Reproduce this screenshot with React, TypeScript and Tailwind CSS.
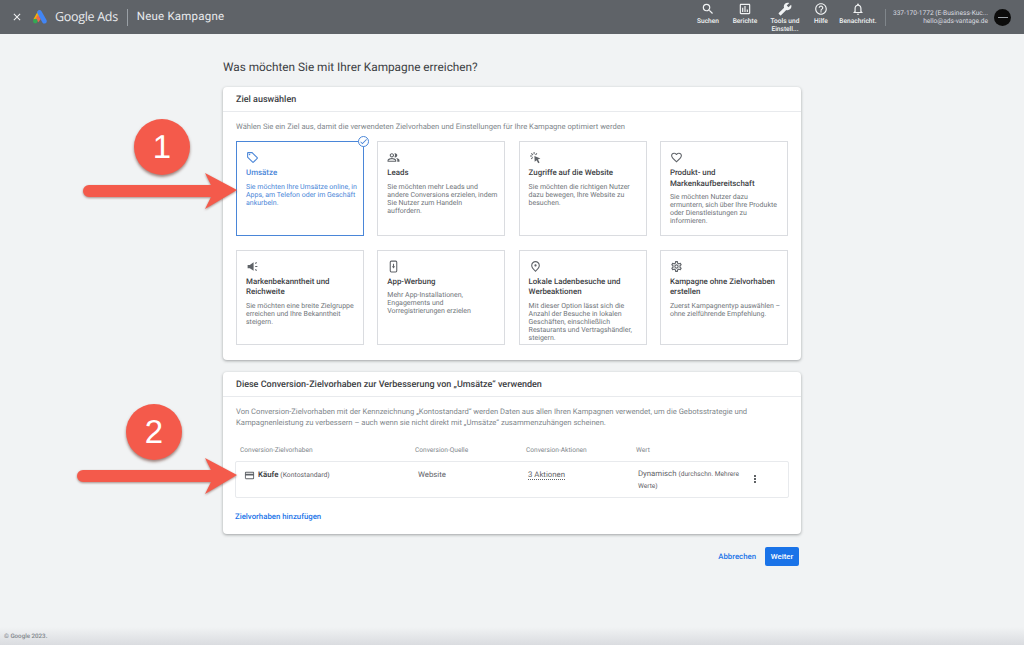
import React from "react";
import {
  MdClose,
  MdSearch,
  MdOutlineAssessment,
  MdBuild,
  MdHelpOutline,
  MdOutlineNotifications,
  MdOutlineLocalOffer,
  MdOutlinePeopleAlt,
  MdFavoriteBorder,
  MdOutlinePlace,
  MdOutlineSettings,
  MdOutlineCreditCard,
  MdMoreVert,
  MdCheck,
} from "react-icons/md";

const ClickIcon = ({ className }: { className?: string }) => (
  <svg viewBox="0 0 24 24" className={className} fill="currentColor">
    <path d="M10 9l11 5-4.5 1.6L19.5 21l-2.5 1.4-3-5.4L10.5 20z" />
    <path d="M8.5 2h1.8v4H8.5zM2 8.5h4v1.8H2zM3.6 4.9l1.3-1.3 2.8 2.8-1.3 1.3zM3.4 14.1l2.8-2.8 1.3 1.3-2.8 2.8zM14 3.7l1.3 1.3-2.7 2.7-1.3-1.3z" />
  </svg>
);

const SpeakerIcon = ({ className }: { className?: string }) => (
  <svg viewBox="0 0 24 24" className={className} fill="currentColor">
    <path d="M3 9h4l7-5v16l-7-5H3z" />
    <path d="M17 11h4v2h-4zM16.5 5.5l2.8-1.6 1 1.7-2.8 1.6zM16.5 18.5l1-1.7 2.8 1.6-1 1.7z" />
  </svg>
);

const PhoneIcon = ({ className }: { className?: string }) => (
  <svg viewBox="0 0 24 24" className={className} fill="none" stroke="currentColor" strokeWidth="2">
    <rect x="6" y="2" width="12" height="20" rx="2" />
    <path d="M12 7v6" />
    <path d="M9 11.5h6L12 15.5z" fill="currentColor" stroke="none" />
  </svg>
);

const navItems = [
  { label: "Suchen", icon: MdSearch, width: "w-[36px]", flip: false },
  { label: "Berichte", icon: MdOutlineAssessment, width: "w-[38px]", flip: false },
  { label: "Tools und Einstell...", icon: MdBuild, width: "w-[42px]", flip: true },
  { label: "Hilfe", icon: MdHelpOutline, width: "w-[30px]", flip: false },
  { label: "Benachricht.", icon: MdOutlineNotifications, width: "w-[44px]", flip: false },
];

const goals = [
  { title: "Umsätze", text: "Sie möchten Ihre Umsätze online, in Apps, am Telefon oder im Geschäft ankurbeln.", icon: MdOutlineLocalOffer, active: true },
  { title: "Leads", text: "Sie möchten mehr Leads und andere Conversions erzielen, indem Sie Nutzer zum Handeln\nauffordern.", icon: MdOutlinePeopleAlt },
  { title: "Zugriffe auf die Website", text: "Sie möchten die richtigen Nutzer dazu bewegen, Ihre Website zu besuchen.", icon: ClickIcon },
  { title: "Produkt- und Markenkaufbereitschaft", text: "Sie möchten Nutzer dazu ermuntern, sich über Ihre Produkte oder Dienstleistungen zu informieren.", icon: MdFavoriteBorder },
  { title: "Markenbekanntheit und Reichweite", text: "Sie möchten eine breite Zielgruppe erreichen und Ihre Bekanntheit steigern.", icon: SpeakerIcon },
  { title: "App-Werbung", text: "Mehr App-Installationen, Engagements und Vorregistrierungen erzielen", icon: PhoneIcon },
  { title: "Lokale Ladenbesuche und Werbeaktionen", text: "Mit dieser Option lässt sich die Anzahl der Besuche in lokalen Geschäften, einschließlich Restaurants und Vertragshändler, steigern.", icon: MdOutlinePlace },
  { title: "Kampagne ohne Zielvorhaben erstellen", text: "Zuerst Kampagnentyp auswählen – ohne zielführende Empfehlung.", icon: MdOutlineSettings },
];

const GoogleAdsLogo = () => (
  <svg viewBox="0 0 18 18" className="w-4 h-4 shrink-0">
    <path d="M6.6 2.6 1.6 11.5l3.6 2.2 5-8.9z" fill="#f4b400" />
    <path d="M7 1.6c1.2-.9 2.9-.5 3.7.8l5.6 10c.7 1.3.3 2.9-1 3.7-1.3.7-2.9.3-3.6-1L6.1 5.2C5.4 4 5.8 2.5 7 1.6z" fill="#4285f4" />
    <path d="M6.6 6.4 4 11l3 4 2.8-3.6z" fill="#ea6a4f" />
    <circle cx="3.7" cy="13.6" r="2.6" fill="#34a853" />
  </svg>
);

const Arrow = ({ className, width }: { className: string; width: number }) => (
  <svg width={width} height={38} className={className}>
    <path
      d={`M6 13 H${width - 27} L${width - 33} 1 L${width - 1} 18 L${width - 33} 37 L${width - 27} 25 H6 a6 6 0 0 1 0 -12 z`}
      fill="#f45a4b"
    />
  </svg>
);

const Badge = ({ n, className }: { n: string; className: string }) => (
  <div className={`absolute w-[56px] h-[56px] rounded-full bg-[#f45a4b] shadow-[0_2px_3px_rgba(90,40,30,0.55)] flex items-center justify-center text-white text-[33px] font-['Liberation_Sans',sans-serif] ${className}`}>
    {n}
  </div>
);

export default function App() {
  return (
    <div className="relative w-[1024px] h-[645px] overflow-hidden bg-[#f1f3f4] font-['Roboto',sans-serif] text-[#3c4043] antialiased [text-rendering:geometricPrecision]">
      {/* Top bar */}
      <header className="h-[34px] bg-[#5f6368] flex items-center text-white">
        <MdClose className="ml-[11px] w-[12px] h-[12px] text-[#f1f3f4]" />
        <div className="ml-[9px]">
          <GoogleAdsLogo />
        </div>
        <span className="ml-[7px] text-[12.5px] text-[#e8eaed] font-['Open_Sans',sans-serif] font-medium tracking-[-0.3px]">Google Ads</span>
        <div className="ml-[9px] w-px h-[17px] bg-[#9aa0a6]" />
        <span className="ml-[9px] text-[11.5px] text-[#e8eaed] tracking-[0.2px]">Neue Kampagne</span>

        <nav className="ml-auto flex items-start self-start pt-[2px] pr-[5px]">
          {navItems.map((item) => (
            <div key={item.label} className={`${item.width} flex flex-col items-center`}>
              <item.icon className={`w-[14px] h-[14px] text-[#f1f3f4] ${item.flip ? "-scale-x-100" : ""}`} />
              <span className="mt-[1px] text-[6.6px] leading-[8px] font-medium text-center text-[#f1f3f4]">{item.label}</span>
            </div>
          ))}
        </nav>
        <div className="w-px h-[17px] bg-[#80868b]" />
        <div className="ml-[7px] text-right text-[6.6px] leading-[8.5px] text-[#dadce0]">
          <div>337-170-1772 (E-Business-Kuc...</div>
          <div>hello@ads-vantage.de</div>
        </div>
        <div className="ml-[6px] mr-[13px] w-[17px] h-[17px] rounded-full bg-[#0c0c0c] flex items-center justify-center">
          <div className="w-[10px] h-px bg-[#9aa0a6]" />
        </div>
      </header>

      <main className="w-[578px] mx-auto">
        <h1 className="mt-[25px] text-[11.8px] leading-[16px] text-[#3c4043]">Was möchten Sie mit Ihrer Kampagne erreichen?</h1>

        {/* Goal card */}
        <section className="mt-[12px] h-[273px] bg-white rounded-[4px] shadow-[0_1px_3px_rgba(60,64,67,0.45)]">
          <div className="h-[25px] px-[13px] pt-[3px] flex items-center border-b border-[#e8eaed] text-[9px] font-medium text-[#3c4043]">Ziel auswählen</div>
          <p className="mx-[13px] mt-[10px] text-[7.62px] leading-[10px] text-[#80868b]">
            Wählen Sie ein Ziel aus, damit die verwendeten Zielvorhaben und Einstellungen für Ihre Kampagne optimiert werden
          </p>
          <div className="mx-[13px] mt-[9px] grid grid-cols-[128px_128px_128px_128px] auto-rows-[95px] gap-x-[13.3px] gap-y-[13.5px]">
            {goals.map((goal) => (
              <div
                key={goal.title}
                className={`relative pl-[9px] pr-[5px] pt-[9px] ${goal.active ? "border-[1.5px] border-[#4a86d8]" : "border border-[#dadce0]"}`}
              >
                <goal.icon className={`w-[13px] h-[13px] ${goal.active ? "text-[#4a86d8]" : "text-[#5f6368]"}`} />
                <h3 className={`mt-[4px] text-[7.9px] leading-[10.6px] font-medium ${goal.active ? "text-[#4a86d8]" : "text-[#3c4043]"}`}>{goal.title}</h3>
                <p className={`mt-[4px] text-[7px] leading-[8px] whitespace-pre-line ${goal.active ? "text-[#4a86d8]" : "text-[#70757a]"}`}>{goal.text}</p>
                {goal.active && (
                  <div className="absolute -top-[6px] -right-[6px] w-[11px] h-[11px] rounded-full bg-white border border-[#4a86d8] flex items-center justify-center">
                    <MdCheck className="w-[9px] h-[9px] text-[#4a86d8]" />
                  </div>
                )}
              </div>
            ))}
          </div>
        </section>

        {/* Conversion card */}
        <section className="mt-[12px] h-[162px] bg-white rounded-[4px] shadow-[0_1px_3px_rgba(60,64,67,0.45)]">
          <div className="h-[25px] px-[13px] pt-[3px] flex items-center border-b border-[#e8eaed] text-[9px] font-medium text-[#3c4043]">
            Diese Conversion-Zielvorhaben zur Verbesserung von „Umsätze“ verwenden
          </div>
          <p className="mx-[13px] mt-[10px] text-[7.62px] leading-[10.7px] text-[#80868b]">
            Von Conversion-Zielvorhaben mit der Kennzeichnung „Kontostandard“ werden Daten aus allen Ihren Kampagnen verwendet, um die Gebotsstrategie und Kampagnenleistung zu verbessern – auch wenn sie nicht direkt mit „Umsätze“ zusammenzuhängen scheinen.
          </p>
          <div className="mt-[17px] ml-[17px] flex text-[6.6px] leading-[10px] text-[#80868b]">
            <span className="w-[175px]">Conversion-Zielvorhaben</span>
            <span className="w-[111px]">Conversion-Quelle</span>
            <span className="w-[110px]">Conversion-Aktionen</span>
            <span>Wert</span>
          </div>
          <div className="mt-[6px] mx-[12px] h-[37px] border border-[#e8eaed] rounded-[2px] flex items-start text-[7.8px] text-[#5f6368]">
            <div className="w-[182px] pl-[8px] pt-[7px] flex items-center">
              <MdOutlineCreditCard className="w-[11px] h-[11px] text-[#5f6368]" />
              <span className="ml-[3px] font-semibold text-[#3c4043]">Käufe</span>
              <span className="ml-[2px] text-[6.8px]">(Kontostandard)</span>
            </div>
            <div className="w-[110px] pt-[7px]">Website</div>
            <div className="w-[110px] pt-[7px]">
              <span className="border-b border-dotted border-[#5f6368]">3 Aktionen</span>
            </div>
            <div className="w-[112px] pt-[6px] leading-[11px]">
              Dynamisch <span className="text-[6.6px]">(durchschn. Mehrere Werte)</span>
            </div>
            <MdMoreVert className="mt-[11px] -ml-[1px] w-[12px] h-[12px] text-[#3c4043]" />
          </div>
          <div className="mt-[14px] ml-[12px] text-[7.8px] leading-[10px] font-medium text-[#1a73e8]">Zielvorhaben hinzufügen</div>
        </section>

        {/* Actions */}
        <div className="mt-[13px] flex items-center justify-end pr-[2px]">
          <span className="text-[7.8px] font-medium text-[#1a73e8]">Abbrechen</span>
          <button className="ml-[9px] w-[34px] h-[19px] rounded-[2px] bg-[#1a73e8] text-white text-[7.8px] font-medium">Weiter</button>
        </div>
      </main>

      <footer className="absolute left-0 right-0 bottom-0 h-[18px] pl-[4px] pt-[5px] bg-gradient-to-b from-[#f1f3f4] to-[#dadce0] text-[6.2px] leading-[9px] font-medium text-[#80868b]">
        © Google 2023.
      </footer>

      {/* Annotations over the screenshot */}
      <Badge n="1" className="left-[134px] top-[119px]" />
      <Badge n="2" className="left-[126px] top-[404px]" />
      <Arrow className="absolute left-[83px] top-[172px] drop-shadow-[0_1px_1px_rgba(90,40,30,0.5)]" width={155} />
      <Arrow className="absolute left-[77px] top-[457px] drop-shadow-[0_1px_1px_rgba(90,40,30,0.5)]" width={161} />
    </div>
  );
}
